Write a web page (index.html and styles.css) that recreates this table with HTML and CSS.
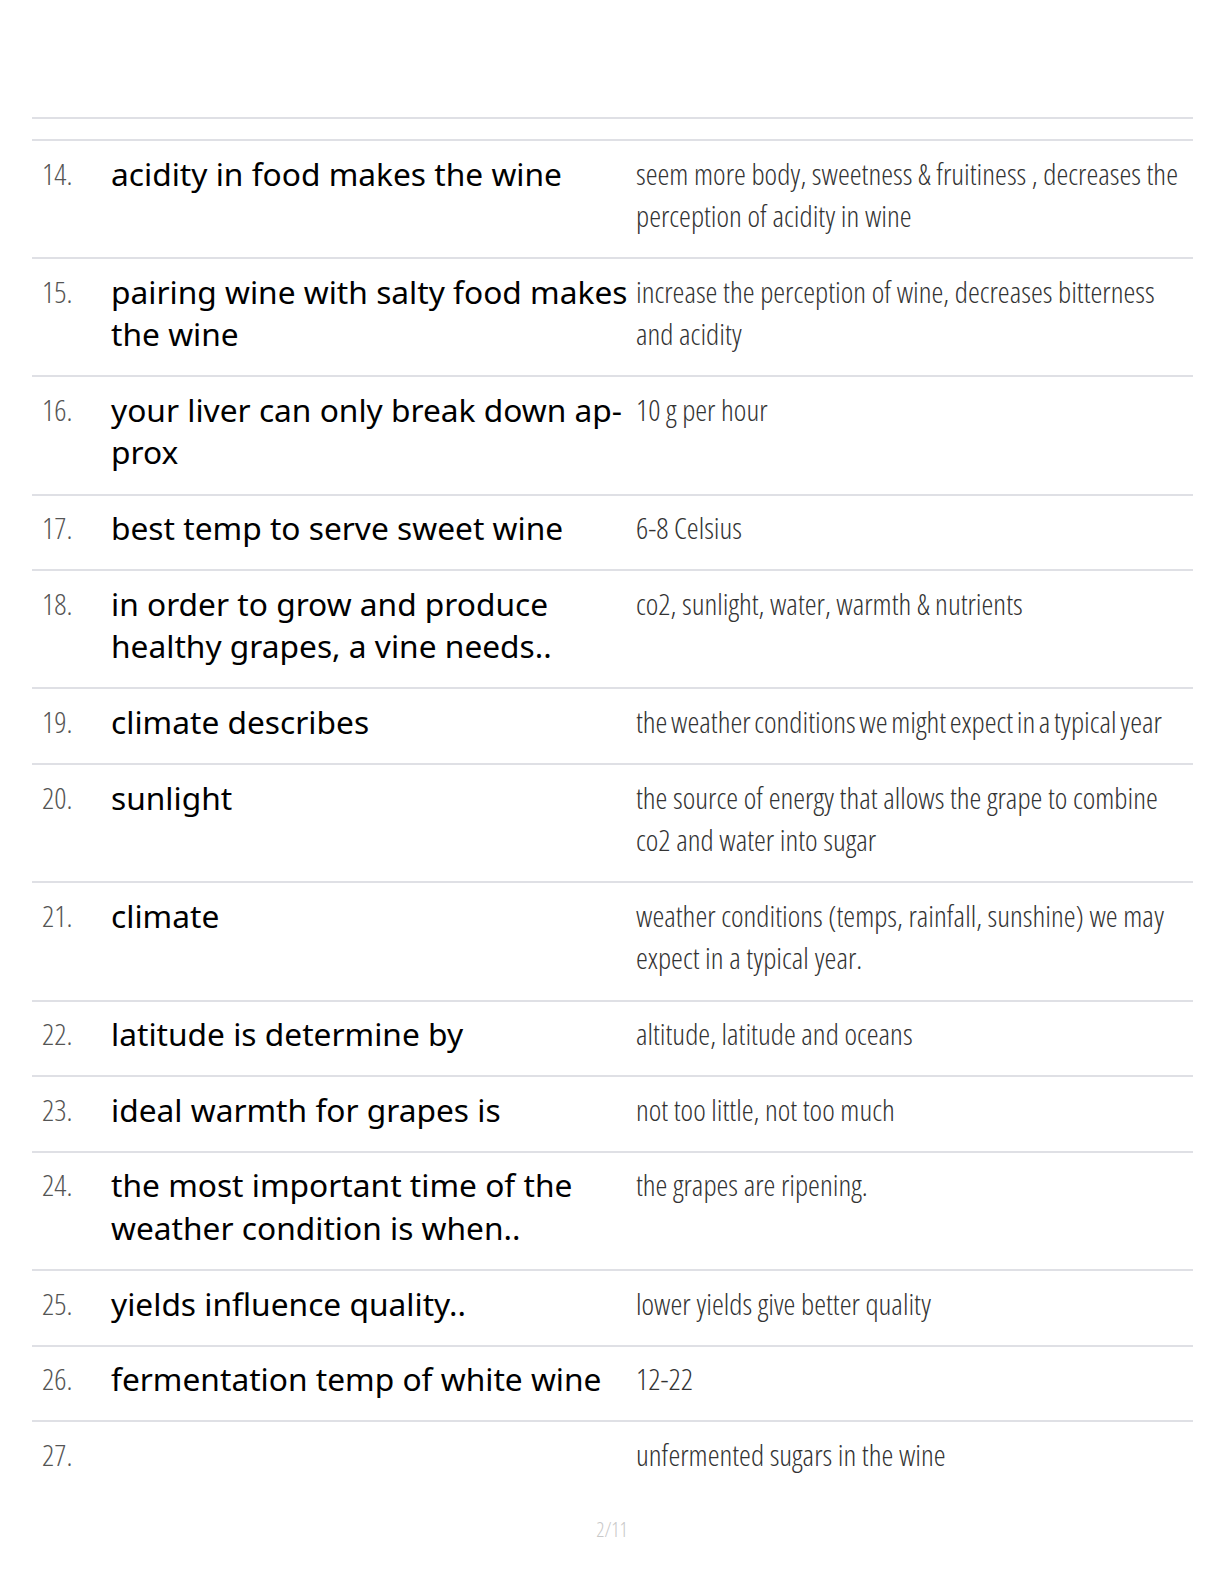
FILE: index.html
```html
<!DOCTYPE html>
<html>
<head>
<meta charset="utf-8">
<link rel="stylesheet" href="styles.css">
</head>
<body>
<div class="page">
  <div class="table">
    <div class="head"></div>
    <div class="row"><div class="num">14.</div><div class="q">acidity in food makes the wine</div><div class="a">seem more body, sweetness &amp; fruitiness , decreases the perception of acidity in wine</div></div>
    <div class="row"><div class="num">15.</div><div class="q">pairing wine with salty food makes the wine</div><div class="a">increase the perception of wine, decreases bitterness and acidity</div></div>
    <div class="row"><div class="num">16.</div><div class="q">your liver can only break down ap-<br>prox</div><div class="a">10 g per hour</div></div>
    <div class="row"><div class="num">17.</div><div class="q">best temp to serve sweet wine</div><div class="a">6-8 Celsius</div></div>
    <div class="row"><div class="num">18.</div><div class="q">in order to grow and produce healthy grapes, a vine needs..</div><div class="a">co2, sunlight, water, warmth &amp; nutrients</div></div>
    <div class="row"><div class="num">19.</div><div class="q">climate describes</div><div class="a tight">the weather conditions we might expect in a typical year</div></div>
    <div class="row"><div class="num">20.</div><div class="q">sunlight</div><div class="a">the source of energy that allows the grape to combine co2 and water into sugar</div></div>
    <div class="row"><div class="num">21.</div><div class="q">climate</div><div class="a">weather conditions (temps, rainfall, sunshine) we may expect in a typical year.</div></div>
    <div class="row"><div class="num">22.</div><div class="q">latitude is determine by</div><div class="a">altitude, latitude and oceans</div></div>
    <div class="row"><div class="num">23.</div><div class="q">ideal warmth for grapes is</div><div class="a">not too little, not too much</div></div>
    <div class="row"><div class="num">24.</div><div class="q">the most important time of the weather condition is when..</div><div class="a">the grapes are ripening.</div></div>
    <div class="row"><div class="num">25.</div><div class="q">yields influence quality..</div><div class="a">lower yields give better quality</div></div>
    <div class="row"><div class="num">26.</div><div class="q">fermentation temp of white wine</div><div class="a">12-22</div></div>
    <div class="row last"><div class="num">27.</div><div class="q"></div><div class="a">unfermented sugars in the wine</div></div>
  </div>
  <div class="footer">2/11</div>
</div>
</body>
</html>
```
FILE: styles.css
```css
html, body {
  margin: 0;
  padding: 0;
  background: #ffffff;
}
.page {
  width: 1224px;
  height: 1584px;
  box-sizing: border-box;
  padding-top: 117px;
  overflow: hidden;
}
.table {
  margin-left: 32px;
  width: 1161px;
  border-top: 2px solid #dfe0e5;
}
.head {
  height: 20px;
  border-bottom: 2px solid #dfe0e5;
}
.row {
  display: grid;
  grid-template-columns: 79px 518px 1fr;
  padding: 11.5px 0 19.7px 0;
  border-bottom: 2px solid #dfe0e5;
  line-height: 42.5px;
}
.row.last {
  border-bottom: none;
}
.num {
  padding-left: 10px;
  font-family: "Open Sans", sans-serif;
  font-weight: 300;
  font-stretch: 75%;
  font-size: 30px;
  color: #555;
}
.q {
  font-family: "Noto Sans", sans-serif;
  font-size: 31.7px;
  color: #000;
  margin-right: -12px;
}
.a {
  padding-left: 7px;
  padding-right: 6px;
  font-family: "Open Sans", sans-serif;
  font-weight: 300;
  font-stretch: 75%;
  font-size: 30px;
  color: #333;
}
.a.tight {
  word-spacing: -2px;
}
.footer {
  margin-top: 22px;
  text-align: center;
  font-family: "Open Sans", sans-serif;
  font-weight: 300;
  font-stretch: 75%;
  font-size: 20px;
  line-height: 24px;
  color: #c8c8c8;
}
```
